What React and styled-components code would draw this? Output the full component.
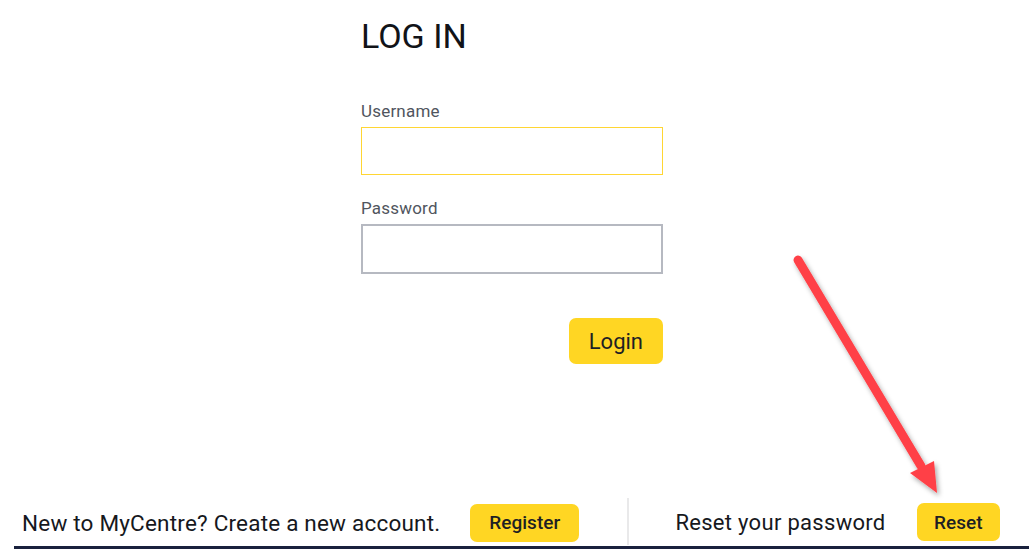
import React from 'react';
import styled, { createGlobalStyle } from 'styled-components';

const GlobalStyle = createGlobalStyle`
    html, body {
        margin: 0;
        padding: 0;
        background: #ffffff;
    }
    body {
        font-family: Roboto, "Liberation Sans", Arial, sans-serif;
    }
`;

const PageStyle = styled.div`
    position: relative;
    width: 1029px;
    height: 557px;
    display: flex;
    flex-direction: column;
    overflow: hidden;
`;

const MainStyle = styled.div`
    flex: 1;
    padding: 18px 0 0 361px;
`;

const FormStyle = styled.form`
    width: 302px;
    display: flex;
    flex-direction: column;
`;

const TitleStyle = styled.h1`
    margin: 0 0 47px;
    font-size: 34px;
    line-height: 36px;
    font-weight: 400;
    color: #111318;
`;

const LabelStyle = styled.label`
    display: block;
    font-size: 17px;
    line-height: 20px;
    letter-spacing: 0.2px;
    color: #50555e;
    margin-bottom: 6px;
`;

const InputStyle = styled.input`
    box-sizing: border-box;
    width: 302px;
    height: ${props => props.$height}px;
    margin: 0 0 ${props => props.$gap}px;
    padding: 0 10px;
    border: ${props => props.$focused ? '1.5px solid #ffd633' : '2px solid #b6b9c1'};
    border-radius: 0;
    outline: none;
    background: #fff;
    font-size: 17px;
`;

const ActionsStyle = styled.div`
    display: flex;
    justify-content: flex-end;
    padding-top: 44px;
`;

const YellowButton = styled.button`
    box-sizing: border-box;
    height: ${props => props.$height}px;
    padding: 0 ${props => props.$pad}px;
    border: none;
    border-radius: 7px;
    background: #ffd623;
    color: #1e1f24;
    font-family: Roboto, "Liberation Sans", Arial, sans-serif;
    font-size: ${props => props.$size}px;
    font-weight: ${props => props.$weight};
    cursor: pointer;
`;

const FooterStyle = styled.div`
    display: flex;
    height: 48px;
    margin: 0 0 8px 14px;
    border-bottom: 3px solid #19213d;
`;

const FooterLeft = styled.div`
    width: 613px;
    display: flex;
    align-items: center;
    padding: 1px 0 0 8px;
    box-sizing: border-box;
    gap: 30px;
`;

const FooterRight = styled.div`
    flex: 1;
    display: flex;
    align-items: center;
    justify-content: flex-end;
    gap: 31px;
    padding: 1px 29px 0 0;
    border-left: 2px solid #e9e9ea;
    margin-bottom: 1px;
`;

const FooterText = styled.span`
    font-size: ${props => props.$size}px;
    color: #16181d;
    letter-spacing: ${props => props.$spacing || 0}px;
`;

const ArrowStyle = styled.svg`
    position: absolute;
    left: 0;
    top: 0;
    pointer-events: none;
`;

function Arrow() {
    return (
        <ArrowStyle width="1029" height="557" viewBox="0 0 1029 557">
            <defs>
                <filter id="shadow" x="-20%" y="-20%" width="140%" height="140%">
                    <feDropShadow dx="2" dy="3" stdDeviation="2.5" floodColor="#000" floodOpacity="0.35" />
                </filter>
            </defs>
            <g filter="url(#shadow)">
                <line x1="798" y1="260" x2="921" y2="466" stroke="#ff4046" strokeWidth="9" strokeLinecap="round" />
                <polygon points="910,473 934,461 937,493" fill="#ff4046" />
            </g>
        </ArrowStyle>
    );
}

export default function App() {
    return (
        <>
            <GlobalStyle />
            <PageStyle>
                <MainStyle>
                    <FormStyle onSubmit={e => e.preventDefault()}>
                        <TitleStyle>LOG IN</TitleStyle>
                        <LabelStyle htmlFor="username">Username</LabelStyle>
                        <InputStyle id="username" $height={48} $gap={23} $focused />
                        <LabelStyle htmlFor="password">Password</LabelStyle>
                        <InputStyle id="password" type="password" $height={50} $gap={0} />
                        <ActionsStyle>
                            <YellowButton type="submit" $height={46} $pad={20} $size={22} $weight={400}>Login</YellowButton>
                        </ActionsStyle>
                    </FormStyle>
                </MainStyle>
                <FooterStyle>
                    <FooterLeft>
                        <FooterText $size={22.5} $spacing={0.2}>New to MyCentre? Create a new account.</FooterText>
                        <YellowButton $height={38} $pad={19} $size={19} $weight={500}>Register</YellowButton>
                    </FooterLeft>
                    <FooterRight>
                        <FooterText $size={22} $spacing={0.3}>Reset your password</FooterText>
                        <YellowButton $height={38} $pad={17.5} $size={19} $weight={500}>Reset</YellowButton>
                    </FooterRight>
                </FooterStyle>
                <Arrow />
            </PageStyle>
        </>
    );
}
